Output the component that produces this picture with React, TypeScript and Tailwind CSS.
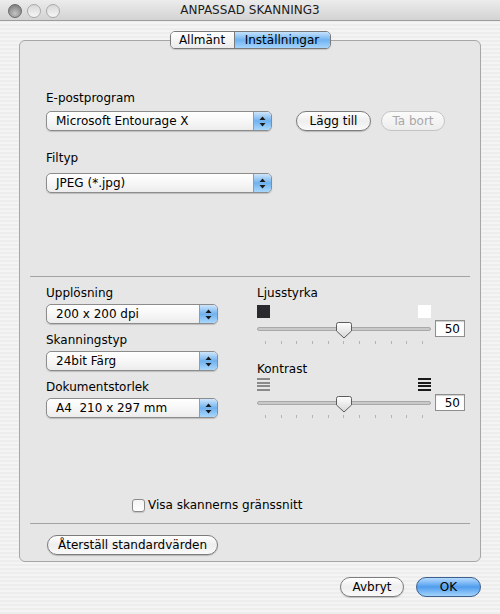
import React from 'react';

const font = { fontFamily: '"DejaVu Sans", "Liberation Sans", sans-serif' };

const PopupArrows = () => (
  <svg width="7" height="11" viewBox="0 0 7 11">
    <path d="M3.5 0.5 L6.5 4 H0.5 Z" fill="#1a1a1a" />
    <path d="M3.5 10.5 L6.5 7 H0.5 Z" fill="#1a1a1a" />
  </svg>
);

const Popup = ({ label, width }: { label: string; width: string }) => (
  <div
    className={`${width} h-[20px] flex items-stretch rounded-[5px] border border-[#8c8c8c] bg-gradient-to-b from-white via-[#f7f7f7] to-[#ececec] shadow-[0_1px_1px_rgba(0,0,0,0.18)] overflow-hidden`}
  >
    <div className="flex-1 flex items-center pl-[9px] text-[12px] text-black whitespace-pre">{label}</div>
    <div className="w-[18px] flex items-center justify-center border-l border-[#7d9fc9] bg-gradient-to-b from-[#cfe6fb] via-[#6fb1ee] to-[#a9d7fd]">
      <PopupArrows />
    </div>
  </div>
);

const AquaButton = ({
  label,
  width,
  disabled,
  primary,
}: {
  label: string;
  width: string;
  disabled?: boolean;
  primary?: boolean;
}) => (
  <div
    className={`${width} h-[20px] flex items-center justify-center rounded-full text-[12px] ${
      primary
        ? 'border border-[#3b5f8e] bg-gradient-to-b from-[#b5dbff] via-[#4f9ded] to-[#a3d3fb] text-black'
        : disabled
        ? 'border border-[#c4c4c4] bg-gradient-to-b from-[#fbfbfb] to-[#ededed] text-[#a8a8a8]'
        : 'border border-[#7c7c7c] bg-gradient-to-b from-white via-[#eeeeee] to-[#fafafa] text-black shadow-[0_1px_1px_rgba(0,0,0,0.2)]'
    }`}
  >
    {label}
  </div>
);

const Thumb = () => (
  <svg width="16" height="17" viewBox="0 0 16 17">
    <defs>
      <linearGradient id="tg" x1="0" y1="0" x2="0" y2="1">
        <stop offset="0" stopColor="#ffffff" />
        <stop offset="1" stopColor="#d6d6d6" />
      </linearGradient>
    </defs>
    <path d="M2.5 0.5 H13.5 A2 2 0 0 1 15.5 2.5 V9 L8 16 L0.5 9 V2.5 A2 2 0 0 1 2.5 0.5 Z" fill="url(#tg)" stroke="#5c5c5c" />
  </svg>
);

const Slider = () => (
  <div className="flex items-start gap-[4px]">
    <div className="relative w-[174px] h-[26px]">
      <div className="absolute left-0 right-0 top-[7px] h-[4px] rounded-full bg-[#c9c9c9] border border-[#a9a9a9]" />
      <div className="absolute left-[79px] top-[2px]">
        <Thumb />
      </div>
      <div className="absolute left-[8px] right-[8px] top-[21px] flex justify-between">
        {Array.from({ length: 11 }).map((_, i) => (
          <div key={i} className="w-px h-[3px] bg-[#b4b4b4]" />
        ))}
      </div>
    </div>
    <div className="w-[30px] h-[17px] border border-[#8f8f8f] bg-white flex items-center justify-end pr-[4px] text-[12px] shadow-[inset_0_1px_1px_rgba(0,0,0,0.2)]">
      50
    </div>
  </div>
);

const Lines = ({ color }: { color: string }) => (
  <div className="w-[13px] h-[13px] flex flex-col justify-between">
    {Array.from({ length: 4 }).map((_, i) => (
      <div key={i} className={`h-[2px] ${color}`} />
    ))}
  </div>
);

export default function App() {
  return (
    <div
      style={font}
      className="w-[500px] h-[614px] overflow-hidden bg-[repeating-linear-gradient(0deg,#ededed_0px,#ededed_2px,#f4f4f4_2px,#f4f4f4_4px)] text-[12px] text-black"
    >
      {/* title bar */}
      <div className="relative h-[21px] flex items-center justify-center border-b border-[#9c9c9c] bg-gradient-to-b from-[#ececec] to-[#d3d3d3]">
        <div className="absolute left-[8px] top-[4px] flex gap-[5px]">
          <div className="w-[14px] h-[14px] rounded-full border border-[#6a6a6a] bg-[radial-gradient(circle_at_50%_70%,#c4c4c4,#6f6f6f)]" />
          <div className="w-[14px] h-[14px] rounded-full border border-[#a8a8a8] bg-gradient-to-b from-[#d8d8d8] to-[#f6f6f6]" />
          <div className="w-[14px] h-[14px] rounded-full border border-[#a8a8a8] bg-gradient-to-b from-[#d8d8d8] to-[#f6f6f6]" />
        </div>
        <span className="text-[12px] text-[#1c1c1c]">ANPASSAD SKANNING3</span>
      </div>

      {/* tabs */}
      <div className="relative z-10 mt-[10px] flex justify-center">
        <div className="flex h-[18px] rounded-[5px] border border-[#7a7a7a] overflow-hidden shadow-[0_1px_1px_rgba(0,0,0,0.15)]">
          <div className="w-[64px] flex items-center justify-center bg-gradient-to-b from-white to-[#ebebeb] border-r border-[#7a7a7a]">
            Allmänt
          </div>
          <div className="w-[95px] flex items-center justify-center bg-gradient-to-b from-[#c4e2fd] via-[#6fb3f1] to-[#a6d4fc]">
            Inställningar
          </div>
        </div>
      </div>

      {/* tab box */}
      <div className="-mt-[9px] ml-[19px] w-[462px] h-[522px] rounded-[6px] border border-[#a6a6a6] bg-[#e6e6e6] flex flex-col">
        <div className="pl-[26px] pt-[49px]">
          <div className="h-[16px] leading-[16px]">E-postprogram</div>
          <div className="mt-[5px] flex items-center">
            <Popup label="Microsoft Entourage X" width="w-[226px]" />
            <div className="ml-[24px]">
              <AquaButton label="Lägg till" width="w-[75px]" />
            </div>
            <div className="ml-[10px]">
              <AquaButton label="Ta bort" width="w-[64px]" disabled />
            </div>
          </div>
          <div className="mt-[19px] h-[16px] leading-[16px]">Filtyp</div>
          <div className="mt-[7px]">
            <Popup label="JPEG (*.jpg)" width="w-[226px]" />
          </div>
        </div>

        <div className="mx-[10px] mt-[83px] h-px bg-[#a3a3a3]" />

        <div className="pl-[26px] mt-[8px] h-[136px] flex">
          <div className="w-[211px] flex flex-col">
            <div className="h-[16px] leading-[16px]">Upplösning</div>
            <div className="mt-[3px]">
              <Popup label="200 x 200 dpi" width="w-[172px]" />
            </div>
            <div className="mt-[8px] h-[16px] leading-[16px]">Skanningstyp</div>
            <div className="mt-[3px]">
              <Popup label="24bit Färg" width="w-[172px]" />
            </div>
            <div className="mt-[8px] h-[16px] leading-[16px]">Dokumentstorlek</div>
            <div className="mt-[3px]">
              <Popup label="A4  210 x 297 mm" width="w-[172px]" />
            </div>
          </div>
          <div className="flex flex-col">
            <div className="h-[16px] leading-[16px]">Ljusstyrka</div>
            <div className="mt-[4px] w-[174px] flex justify-between">
              <div className="w-[13px] h-[13px] bg-[#2a2a2e]" />
              <div className="w-[13px] h-[13px] bg-white" />
            </div>
            <div className="mt-[2px]">
              <Slider />
            </div>
            <div className="mt-[15px] h-[16px] leading-[16px]">Kontrast</div>
            <div className="mt-[1px] w-[174px] flex justify-between">
              <Lines color="bg-[#8a8a8a]" />
              <Lines color="bg-[#1a1a1a]" />
            </div>
            <div className="mt-[3px]">
              <Slider />
            </div>
          </div>
        </div>

        <div className="mt-[75px] pl-[112px] flex items-center">
          <div className="w-[13px] h-[13px] rounded-[3px] border border-[#8a8a8a] bg-gradient-to-b from-[#f4f4f4] to-white shadow-[0_1px_1px_rgba(0,0,0,0.15)]" />
          <span className="ml-[3px]">Visa skannerns gränssnitt</span>
        </div>

        <div className="mx-[10px] mt-[9px] h-px bg-[#a3a3a3]" />

        <div className="pl-[27px] mt-[11px]">
          <AquaButton label="Återställ standardvärden" width="w-[171px]" />
        </div>
      </div>

      {/* bottom buttons */}
      <div className="mt-[15px] pr-[19px] flex justify-end gap-[12px]">
        <AquaButton label="Avbryt" width="w-[64px]" />
        <AquaButton label="OK" width="w-[65px]" primary />
      </div>
    </div>
  );
}
